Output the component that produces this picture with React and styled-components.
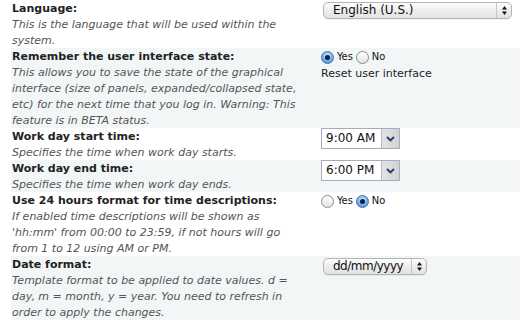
import React from 'react'
import styled, { createGlobalStyle } from 'styled-components'

const GlobalStyle = createGlobalStyle`
  body {
    margin: 0;
    background: #fff;
    font-family: "DejaVu Sans", Verdana, sans-serif;
    font-size: 11px;
    color: #222;
  }
`;

const Page = styled.div`
  padding-left: 11px;
  width: 509px;
`;

const Row = styled.div`
  display: grid;
  grid-template-columns: 292px 1fr;
  column-gap: 17px;
  padding-left: 1px;
  height: ${p => p.$lines * 16}px;
  line-height: 16px;
  background: ${p => (p.$shaded ? '#f3f6f7' : '#fff')};
`;

const TextCell = styled.div`
  padding-top: 1px;
`;

const Label = styled.div`
  font-weight: bold;
  color: #222;
`;

const Desc = styled.div`
  font-style: italic;
  color: #555;
`;

const Control = styled.div`
  display: flex;
  flex-direction: column;
  align-items: flex-start;
`;

const AquaSelect = styled.div`
  margin-top: 2px;
  margin-left: 2px;
  width: ${p => p.$width}px;
  height: 17px;
  box-sizing: border-box;
  border: 1px solid #b4b4b4;
  border-radius: 5px;
  background: linear-gradient(#fdfdfd, #ececec 55%, #e2e2e2);
  box-shadow: 0 1px 0 rgba(0, 0, 0, 0.05);
  display: flex;
  align-items: center;
  font-size: 12px;
  color: #111;
`;

const AquaText = styled.span`
  flex: 1;
  padding-left: 9px;
  line-height: 15px;
  letter-spacing: ${p => (p.$tight ? '-0.5px' : '0')};
`;

const AquaArrows = styled.span`
  width: 14px;
  height: 100%;
  border-left: 1px solid #c4c4c4;
  display: flex;
  align-items: center;
  justify-content: center;
`;

const TimeSelect = styled.div`
  width: 79px;
  height: 21px;
  box-sizing: border-box;
  border: 1px solid #a9abc3;
  background: #fff;
  display: flex;
  font-size: 12px;
  color: #111;
`;

const TimeText = styled.span`
  flex: 1;
  padding-left: 4px;
  line-height: 19px;
`;

const DropButton = styled.span`
  width: 17px;
  border-left: 1px solid #b8bacb;
  background: linear-gradient(90deg, #e3e3e3, #d2d2d2);
  display: flex;
  align-items: center;
  justify-content: center;
`;

const Radios = styled.div`
  display: flex;
  align-items: center;
  height: 16px;
  margin-top: 1px;
  font-family: "DejaVu Sans Condensed", "DejaVu Sans", sans-serif;
  font-size: 11px;
  color: #111;
`;

const RadioDot = styled.span`
  width: 13px;
  height: 13px;
  box-sizing: border-box;
  border-radius: 50%;
  margin-right: 3px;
  position: relative;
  border: 1px solid ${p => (p.$on ? '#4a6fa8' : '#8a8a8a')};
  background: ${p =>
    p.$on
      ? 'radial-gradient(circle at 50% 35%, #d6ecff, #6fb0ec 55%, #3c82d6)'
      : 'linear-gradient(#ffffff, #e4e4e4)'};
  &::after {
    content: '';
    display: ${p => (p.$on ? 'block' : 'none')};
    position: absolute;
    left: 3px;
    top: 3px;
    width: 5px;
    height: 5px;
    border-radius: 50%;
    background: #0e1f3a;
  }
`;

const RadioText = styled.span`
  margin-right: 3px;
`;

const Plain = styled.div`
  color: #222;
  margin-top: 1px;
`;

function UpDown() {
  return (
    <svg width="7" height="11" viewBox="0 0 7 11">
      <path d="M3.5 1 L6 4.5 L1 4.5 Z" fill="#111" />
      <path d="M3.5 10 L6 6.5 L1 6.5 Z" fill="#111" />
    </svg>
  );
}

function Chevron() {
  return (
    <svg width="9" height="6" viewBox="0 0 9 6">
      <path d="M1 1 L4.5 4.5 L8 1" fill="none" stroke="#243a78" strokeWidth="1.8" />
    </svg>
  );
}

function YesNo({ value }) {
  return (
    <Radios>
      <RadioDot $on={value === 'yes'} />
      <RadioText>Yes</RadioText>
      <RadioDot $on={value === 'no'} />
      <RadioText>No</RadioText>
    </Radios>
  );
}

export default function App() {
  return (
    <Page>
      <GlobalStyle />
      <Row $lines={3}>
        <TextCell>
          <Label>Language:</Label>
          <Desc>This is the language that will be used within the system.</Desc>
        </TextCell>
        <Control>
          <AquaSelect $width={189}>
            <AquaText>English (U.S.)</AquaText>
            <AquaArrows><UpDown /></AquaArrows>
          </AquaSelect>
        </Control>
      </Row>
      <Row $lines={5} $shaded>
        <TextCell>
          <Label>Remember the user interface state:</Label>
          <Desc>
            This allows you to save the state of the graphical interface (size of panels,
            expanded/collapsed state, etc) for the next time that you log in. Warning: This
            feature is in BETA status.
          </Desc>
        </TextCell>
        <Control>
          <YesNo value="yes" />
          <Plain>Reset user interface</Plain>
        </Control>
      </Row>
      <Row $lines={2}>
        <TextCell>
          <Label>Work day start time:</Label>
          <Desc>Specifies the time when work day starts.</Desc>
        </TextCell>
        <Control>
          <TimeSelect>
            <TimeText>9:00 AM</TimeText>
            <DropButton><Chevron /></DropButton>
          </TimeSelect>
        </Control>
      </Row>
      <Row $lines={2} $shaded>
        <TextCell>
          <Label>Work day end time:</Label>
          <Desc>Specifies the time when work day ends.</Desc>
        </TextCell>
        <Control>
          <TimeSelect>
            <TimeText>6:00 PM</TimeText>
            <DropButton><Chevron /></DropButton>
          </TimeSelect>
        </Control>
      </Row>
      <Row $lines={4}>
        <TextCell>
          <Label>Use 24 hours format for time descriptions:</Label>
          <Desc>
            If enabled time descriptions will be shown as 'hh:mm' from 00:00 to 23:59, if not
            hours will go from 1 to 12 using AM or PM.
          </Desc>
        </TextCell>
        <Control>
          <YesNo value="no" />
        </Control>
      </Row>
      <Row $lines={4} $shaded>
        <TextCell>
          <Label>Date format:</Label>
          <Desc>
            Template format to be applied to date values. d = day, m = month, y = year. You need
            to refresh in order to apply the changes.
          </Desc>
        </TextCell>
        <Control>
          <AquaSelect $width={104}>
            <AquaText $tight>dd/mm/yyyy</AquaText>
            <AquaArrows><UpDown /></AquaArrows>
          </AquaSelect>
        </Control>
      </Row>
    </Page>
  );
}
